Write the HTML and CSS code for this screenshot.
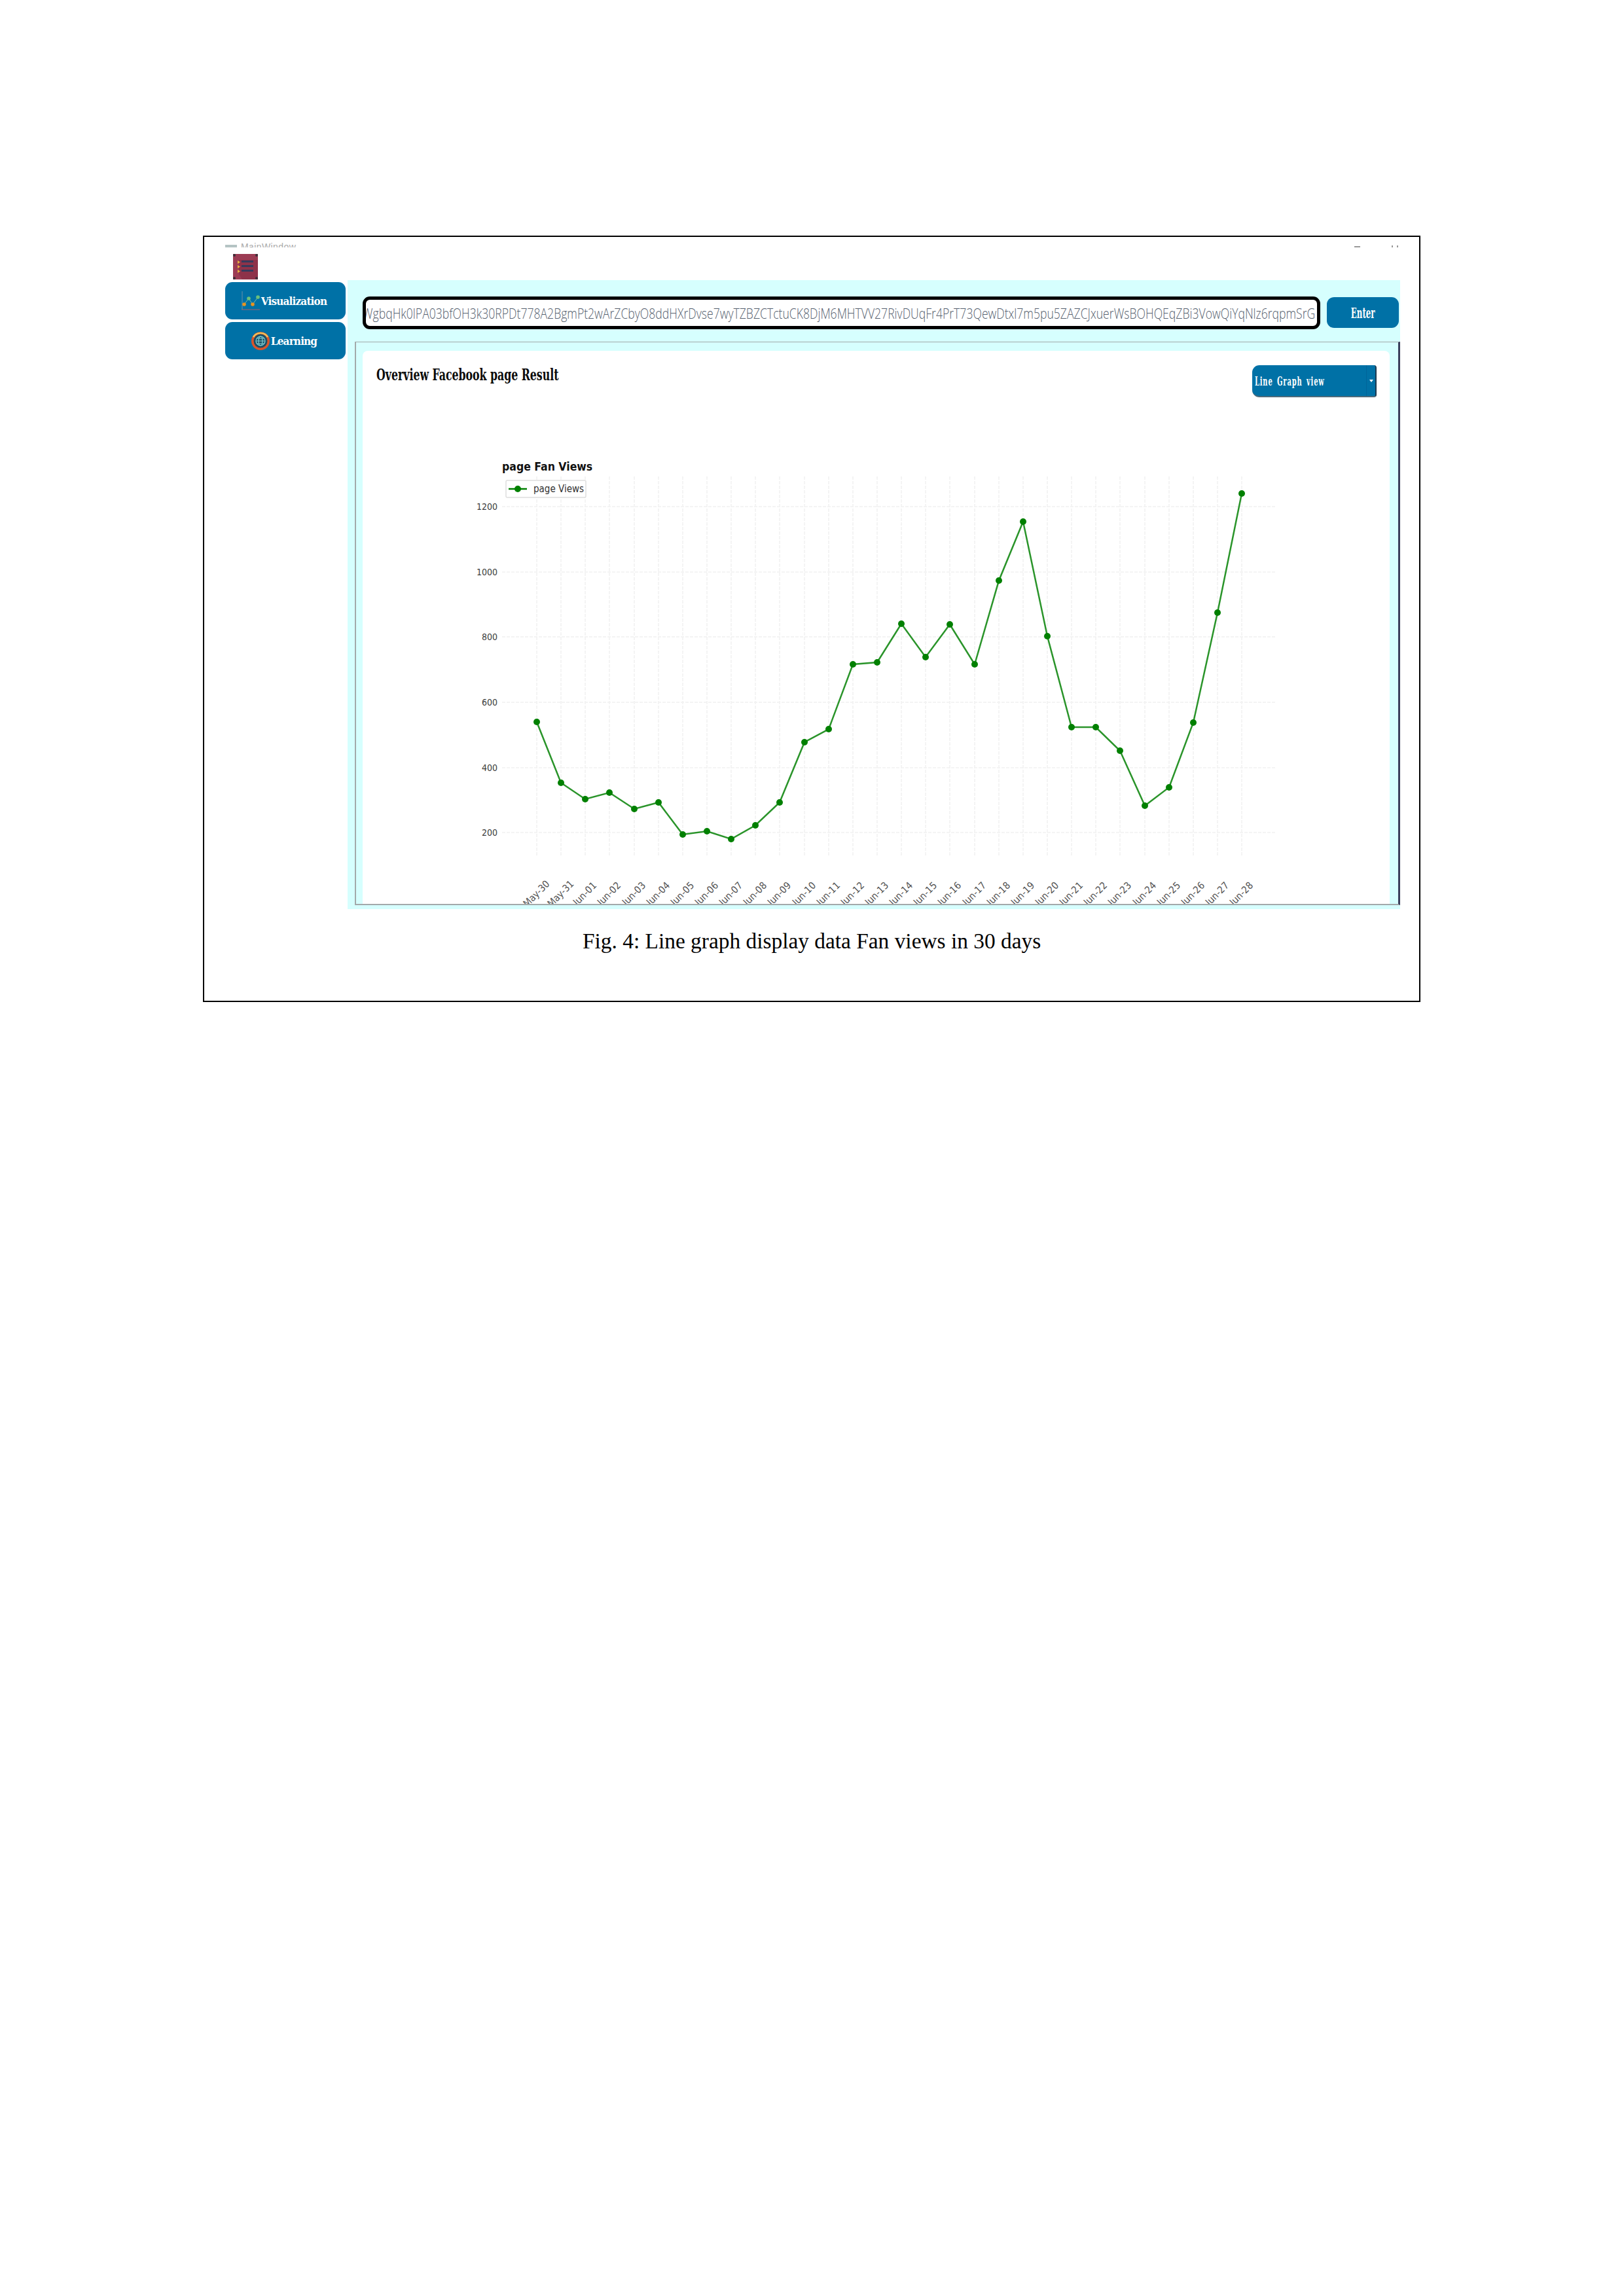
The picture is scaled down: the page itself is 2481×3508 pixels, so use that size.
FILE: index.html
```html
<!DOCTYPE html>
<html lang="en">
<head>
  <meta charset="UTF-8">
  <title>Fig. 4</title>
  <link rel="stylesheet" href="styles.css">
</head>
<body>

<div class="figure">
  <div class="titlebar">
    <span class="win-icon"></span>
    <span class="win-title">MainWindow</span>
    <span class="win-min"></span>
    <span class="win-close"><i></i><i></i></span>
  </div>
  <svg class="app-logo" viewBox="0 0 38 39">
    <rect width="38" height="39" fill="#9c3c54"/>
    <path d="M38 9V39H14L9 31V9z" fill="#8e3249"/>
    <circle cx="2" cy="2" r="2" fill="#3a3038"/><circle cx="36" cy="2" r="2" fill="#3a3038"/>
    <circle cx="2" cy="37" r="2" fill="#3a3038"/><circle cx="36" cy="37" r="2" fill="#3a3038"/>
    <path d="M7 10l4 2.500-4 2.500zM7 17l4 2.500-4 2.500zM7 24l4 2.500-4 2.500z" fill="#e8b13c"/>
    <path d="M13 10h18v3H13zM13 17h18v3H13zM13 24h18v3H13z" fill="#363a5c"/>
  </svg>

  <div class="app">
    <div class="sidebar">
      <div class="side-btn">
        <svg class="side-icon" viewBox="0 0 28 30">
          <path d="M1 0V28" stroke="#6d8fa8" stroke-width="1" fill="none"/>
          <path d="M0 28H28" stroke="#a5606e" stroke-width="1" fill="none"/>
          <path d="M4 20L11 11L17 20L25 9" stroke="#7cb8a0" stroke-width="1" fill="none"/>
          <circle cx="4" cy="20" r="2.800" fill="#e8931f"/>
          <circle cx="11" cy="11" r="2.800" fill="#6cc07a"/>
          <circle cx="17" cy="20" r="2.800" fill="#e8931f"/>
          <circle cx="25" cy="9" r="2.800" fill="#6cc07a"/>
        </svg>
        <span>Visualization</span>
      </div>
      <div class="side-btn">
        <svg class="side-icon" viewBox="0 0 28 30">
          <circle cx="14" cy="15" r="14" fill="#d9552b"/>
          <path d="M3 9A13 13 0 0 1 25 9" stroke="#efc15a" stroke-width="2.500" fill="none"/>
          <circle cx="14" cy="15" r="10.500" fill="#1c4f66"/>
          <circle cx="14" cy="15" r="7" fill="none" stroke="#7fd0d6" stroke-width="1.200"/>
          <ellipse cx="14" cy="15" rx="3" ry="7" fill="none" stroke="#7fd0d6" stroke-width="1.200"/>
          <path d="M7 15H21M8 11H20M8 19H20" stroke="#7fd0d6" stroke-width="1.200"/>
        </svg>
        <span>Learning</span>
      </div>
    </div>

    <div class="panel">
      <div class="search-row">
        <div class="token-box"><span>WgbqHk0lPA03bfOH3k30RPDt778A2BgmPt2wArZCbyO8ddHXrDvse7wyTZBZCTctuCK8DjM6MHTVV27RivDUqFr4PrT73QewDtxl7m5pu5ZAZCJxuerWsBOHQEqZBi3VowQiYqNlz6rqpmSrG</span></div>
        <div class="enter-btn"><span>Enter</span></div>
      </div>

      <div class="frame">
        <div class="card">
          <div class="card-head">
            <h2>Overview Facebook page Result</h2>
            <div class="dropdown">
              <span class="dropdown-label"><span>Line Graph view</span></span>
              <span class="dropdown-arrow"></span>
            </div>
          </div>

          <svg class="chart" viewBox="554 680 1569 701">
            <g class="grid">
              <path d="M767 774H1950M767 874H1950M767 973H1950M767 1073H1950M767 1173H1950M767 1272H1950"/>
              <path d="M820 728V1308M857 728V1308M894 728V1308M931 728V1308M969 728V1308M1006 728V1308M1043 728V1308M1080 728V1308M1117 728V1308M1154 728V1308M1191 728V1308M1229 728V1308M1266 728V1308M1303 728V1308M1340 728V1308M1377 728V1308M1414 728V1308M1451 728V1308M1489 728V1308M1526 728V1308M1563 728V1308M1600 728V1308M1637 728V1308M1674 728V1308M1711 728V1308M1749 728V1308M1786 728V1308M1823 728V1308M1860 728V1308M1897 728V1308"/>
            </g>

            <text class="chart-title" x="767" y="719">page Fan Views</text>

            <g class="y-labels">
              <text x="760" y="779">1200</text>
              <text x="760" y="879">1000</text>
              <text x="760" y="978">800</text>
              <text x="760" y="1078">600</text>
              <text x="760" y="1178">400</text>
              <text x="760" y="1277">200</text>
            </g>

            <polyline class="series" points="820,1103 857,1196 894,1221 931,1211 969,1236 1006,1226 1043,1275 1080,1270 1117,1282 1154,1261 1191,1226 1229,1134 1266,1114 1303,1015 1340,1012 1377,953 1414,1004 1451,954 1489,1015 1526,887 1563,797 1600,972 1637,1111 1674,1111 1711,1147 1749,1231 1786,1203 1823,1104 1860,936 1897,754"/>
            <g class="dots">
              <circle cx="820" cy="1103" r="5"/><circle cx="857" cy="1196" r="5"/><circle cx="894" cy="1221" r="5"/>
              <circle cx="931" cy="1211" r="5"/><circle cx="969" cy="1236" r="5"/><circle cx="1006" cy="1226" r="5"/>
              <circle cx="1043" cy="1275" r="5"/><circle cx="1080" cy="1270" r="5"/><circle cx="1117" cy="1282" r="5"/>
              <circle cx="1154" cy="1261" r="5"/><circle cx="1191" cy="1226" r="5"/><circle cx="1229" cy="1134" r="5"/>
              <circle cx="1266" cy="1114" r="5"/><circle cx="1303" cy="1015" r="5"/><circle cx="1340" cy="1012" r="5"/>
              <circle cx="1377" cy="953" r="5"/><circle cx="1414" cy="1004" r="5"/><circle cx="1451" cy="954" r="5"/>
              <circle cx="1489" cy="1015" r="5"/><circle cx="1526" cy="887" r="5"/><circle cx="1563" cy="797" r="5"/>
              <circle cx="1600" cy="972" r="5"/><circle cx="1637" cy="1111" r="5"/><circle cx="1674" cy="1111" r="5"/>
              <circle cx="1711" cy="1147" r="5"/><circle cx="1749" cy="1231" r="5"/><circle cx="1786" cy="1203" r="5"/>
              <circle cx="1823" cy="1104" r="5"/><circle cx="1860" cy="936" r="5"/><circle cx="1897" cy="754" r="5"/>
            </g>

            <g class="legend">
              <rect x="773" y="734" width="122" height="26" rx="2"/>
              <path d="M777 747H805"/>
              <circle cx="791" cy="747" r="5"/>
              <text x="815" y="752">page Views</text>
            </g>

            <g class="x-labels">
              <text transform="translate(823 1369) rotate(-45)">May-30</text>
              <text transform="translate(860 1369) rotate(-45)">May-31</text>
              <text transform="translate(897 1369) rotate(-45)">Jun-01</text>
              <text transform="translate(934 1369) rotate(-45)">Jun-02</text>
              <text transform="translate(972 1369) rotate(-45)">Jun-03</text>
              <text transform="translate(1009 1369) rotate(-45)">Jun-04</text>
              <text transform="translate(1046 1369) rotate(-45)">Jun-05</text>
              <text transform="translate(1083 1369) rotate(-45)">Jun-06</text>
              <text transform="translate(1120 1369) rotate(-45)">Jun-07</text>
              <text transform="translate(1157 1369) rotate(-45)">Jun-08</text>
              <text transform="translate(1194 1369) rotate(-45)">Jun-09</text>
              <text transform="translate(1232 1369) rotate(-45)">Jun-10</text>
              <text transform="translate(1269 1369) rotate(-45)">Jun-11</text>
              <text transform="translate(1306 1369) rotate(-45)">Jun-12</text>
              <text transform="translate(1343 1369) rotate(-45)">Jun-13</text>
              <text transform="translate(1380 1369) rotate(-45)">Jun-14</text>
              <text transform="translate(1417 1369) rotate(-45)">Jun-15</text>
              <text transform="translate(1454 1369) rotate(-45)">Jun-16</text>
              <text transform="translate(1492 1369) rotate(-45)">Jun-17</text>
              <text transform="translate(1529 1369) rotate(-45)">Jun-18</text>
              <text transform="translate(1566 1369) rotate(-45)">Jun-19</text>
              <text transform="translate(1603 1369) rotate(-45)">Jun-20</text>
              <text transform="translate(1640 1369) rotate(-45)">Jun-21</text>
              <text transform="translate(1677 1369) rotate(-45)">Jun-22</text>
              <text transform="translate(1714 1369) rotate(-45)">Jun-23</text>
              <text transform="translate(1752 1369) rotate(-45)">Jun-24</text>
              <text transform="translate(1789 1369) rotate(-45)">Jun-25</text>
              <text transform="translate(1826 1369) rotate(-45)">Jun-26</text>
              <text transform="translate(1863 1369) rotate(-45)">Jun-27</text>
              <text transform="translate(1900 1369) rotate(-45)">Jun-28</text>
            </g>
          </svg>
        </div>
      </div>
    </div>
  </div>

  <p class="caption">Fig. 4: Line graph display data Fan views in 30 days</p>
</div>

</body>
</html>
```

FILE: styles.css
```css
body {
  margin: 0;
  background: #fff;
  font-family: "Liberation Serif", serif;
}
.figure {
  box-sizing: border-box;
  width: 1860px;
  height: 1171px;
  margin: 360px 0 0 310px;
  border: 2px solid #000;
  background: #fff;
}
.titlebar {
  display: flex;
  align-items: flex-end;
  height: 7px;
  margin: 9px 0 0 32px;
  overflow: hidden;
}
.win-icon {
  width: 18px;
  height: 4px;
  background: #b5c4c4;
}
.win-title {
  margin-left: 6px;
  font: 14px/10px "Liberation Sans", sans-serif;
  letter-spacing: 0.4px;
  color: #aaa;
  height: 6px;
}
.win-min {
  width: 9px;
  height: 2px;
  margin-left: auto;
  margin-right: 48px;
  background: #999;
}
.win-close {
  display: flex;
  gap: 6px;
  margin-right: 32px;
}
.win-close i {
  width: 2px;
  height: 3px;
  background: #999;
}
.app-logo {
  display: block;
  width: 38px;
  height: 39px;
  margin: 10px 0 1px 44px;
}
.app {
  display: flex;
  margin: 0 0 0 32px;
}
.sidebar {
  width: 184px;
  margin-right: 3px;
  padding-top: 3px;
  display: flex;
  flex-direction: column;
  gap: 4px;
}
.side-btn {
  box-sizing: border-box;
  display: flex;
  align-items: center;
  justify-content: center;
  gap: 2px;
  height: 57px;
  padding-right: 4px;
  background: #0071a6;
  border-radius: 11px;
  color: #fff;
  font: bold 17px "DejaVu Serif Condensed", "DejaVu Serif", serif;
  letter-spacing: -0.85px;
}
.side-icon {
  width: 28px;
  height: 30px;
}
.panel {
  box-sizing: border-box;
  width: 1608px;
  height: 961px;
  padding: 25px 0 6px 11px;
  background: #d6fffe;
  display: flex;
  flex-direction: column;
}
.search-row {
  display: flex;
  align-items: flex-start;
  gap: 10px;
  margin-left: 12px;
  height: 69px;
}
.token-box {
  box-sizing: border-box;
  width: 1463px;
  height: 50px;
  border: 5px solid #000;
  border-radius: 11px;
  background: #fff;
  display: flex;
  justify-content: flex-end;
  align-items: center;
  padding-right: 3px;
  overflow: hidden;
  white-space: nowrap;
  font: 300 22px "Open Sans", sans-serif;
  color: #55606e;
}
.token-box span {
  flex-shrink: 0;
  transform: scaleX(0.8);
  transform-origin: right center;
}
.enter-btn {
  width: 110px;
  height: 47px;
  margin-top: 1px;
  background: #0071a6;
  border-radius: 11px;
  color: #fff;
  display: flex;
  align-items: center;
  justify-content: center;
  font: bold 23px "DejaVu Serif Condensed", "DejaVu Serif", serif;
}
.enter-btn span {
  transform: scaleX(0.57);
}
.frame {
  box-sizing: border-box;
  flex: 1;
  padding: 13px 13px 0 10px;
  border-top: 1px solid #a3aaaa;
  border-left: 2px solid #a3aaaa;
  border-bottom: 2px solid #a3aaaa;
  border-right: 3px solid #3a3f5c;
  display: flex;
}
.card {
  flex: 1;
  background: #fff;
  border-radius: 8px 8px 0 0;
  display: flex;
  flex-direction: column;
  overflow: hidden;
}
.card-head {
  display: flex;
  justify-content: space-between;
  align-items: flex-start;
  padding: 22px 20px 0 21px;
}
.card-head h2 {
  margin: 0;
  font: bold 24px "DejaVu Serif Condensed", "DejaVu Serif", serif;
  color: #0b0b0b;
  white-space: nowrap;
  transform: scaleX(0.73);
  transform-origin: left center;
}
.dropdown {
  box-sizing: border-box;
  display: flex;
  width: 190px;
  height: 49px;
  background: #0071a6;
  border-radius: 11px 4px 4px 11px;
  border-right: 2px solid #1d3a50;
  border-bottom: 2px solid #4d6a7a;
  color: #fff;
}
.dropdown-label {
  flex: 1;
  min-width: 0;
  display: flex;
  align-items: center;
  padding-left: 4px;
  font: bold 19px "DejaVu Serif Condensed", "DejaVu Serif", serif;
  letter-spacing: 1.4px;
  word-spacing: 4px;
}
.dropdown-label span {
  flex-shrink: 0;
  transform: scaleX(0.58);
  transform-origin: left center;
  white-space: nowrap;
}
.dropdown-arrow {
  flex-shrink: 0;
  width: 13px;
  border-left: 1px solid #00659a;
  display: flex;
  align-items: center;
  justify-content: center;
}
.dropdown-arrow::before {
  content: "";
  border-left: 3px solid transparent;
  border-right: 3px solid transparent;
  border-top: 4px solid #fff;
}
.chart {
  display: block;
  width: 1569px;
  height: 701px;
  margin-top: 73px;
  font-family: "DejaVu Sans Condensed", "DejaVu Sans", sans-serif;
}
.grid path {
  fill: none;
  stroke: #f1f1f1;
  stroke-width: 1.5;
  stroke-dasharray: 5 2;
}
.chart-title {
  font-size: 17.500px;
  font-weight: bold;
  fill: #111;
}
.y-labels text {
  font-size: 14px;
  text-anchor: end;
  fill: #3c3c3c;
}
.x-labels text {
  font-size: 15px;
  text-anchor: middle;
  fill: #555;
}
.series {
  fill: none;
  stroke: #2a942a;
  stroke-width: 2.5;
}
.dots circle {
  fill: #008000;
}
.legend rect {
  fill: #fff;
  stroke: #dedede;
  stroke-width: 1.5;
}
.legend path {
  stroke: #008000;
  stroke-width: 2.5;
}
.legend circle {
  fill: #008000;
}
.legend text {
  font-size: 15px;
  fill: #333;
}
.caption {
  margin: 28px 0 0 578px;
  font-size: 33.400px;
  line-height: 42px;
  color: #000;
  white-space: nowrap;
}
```
